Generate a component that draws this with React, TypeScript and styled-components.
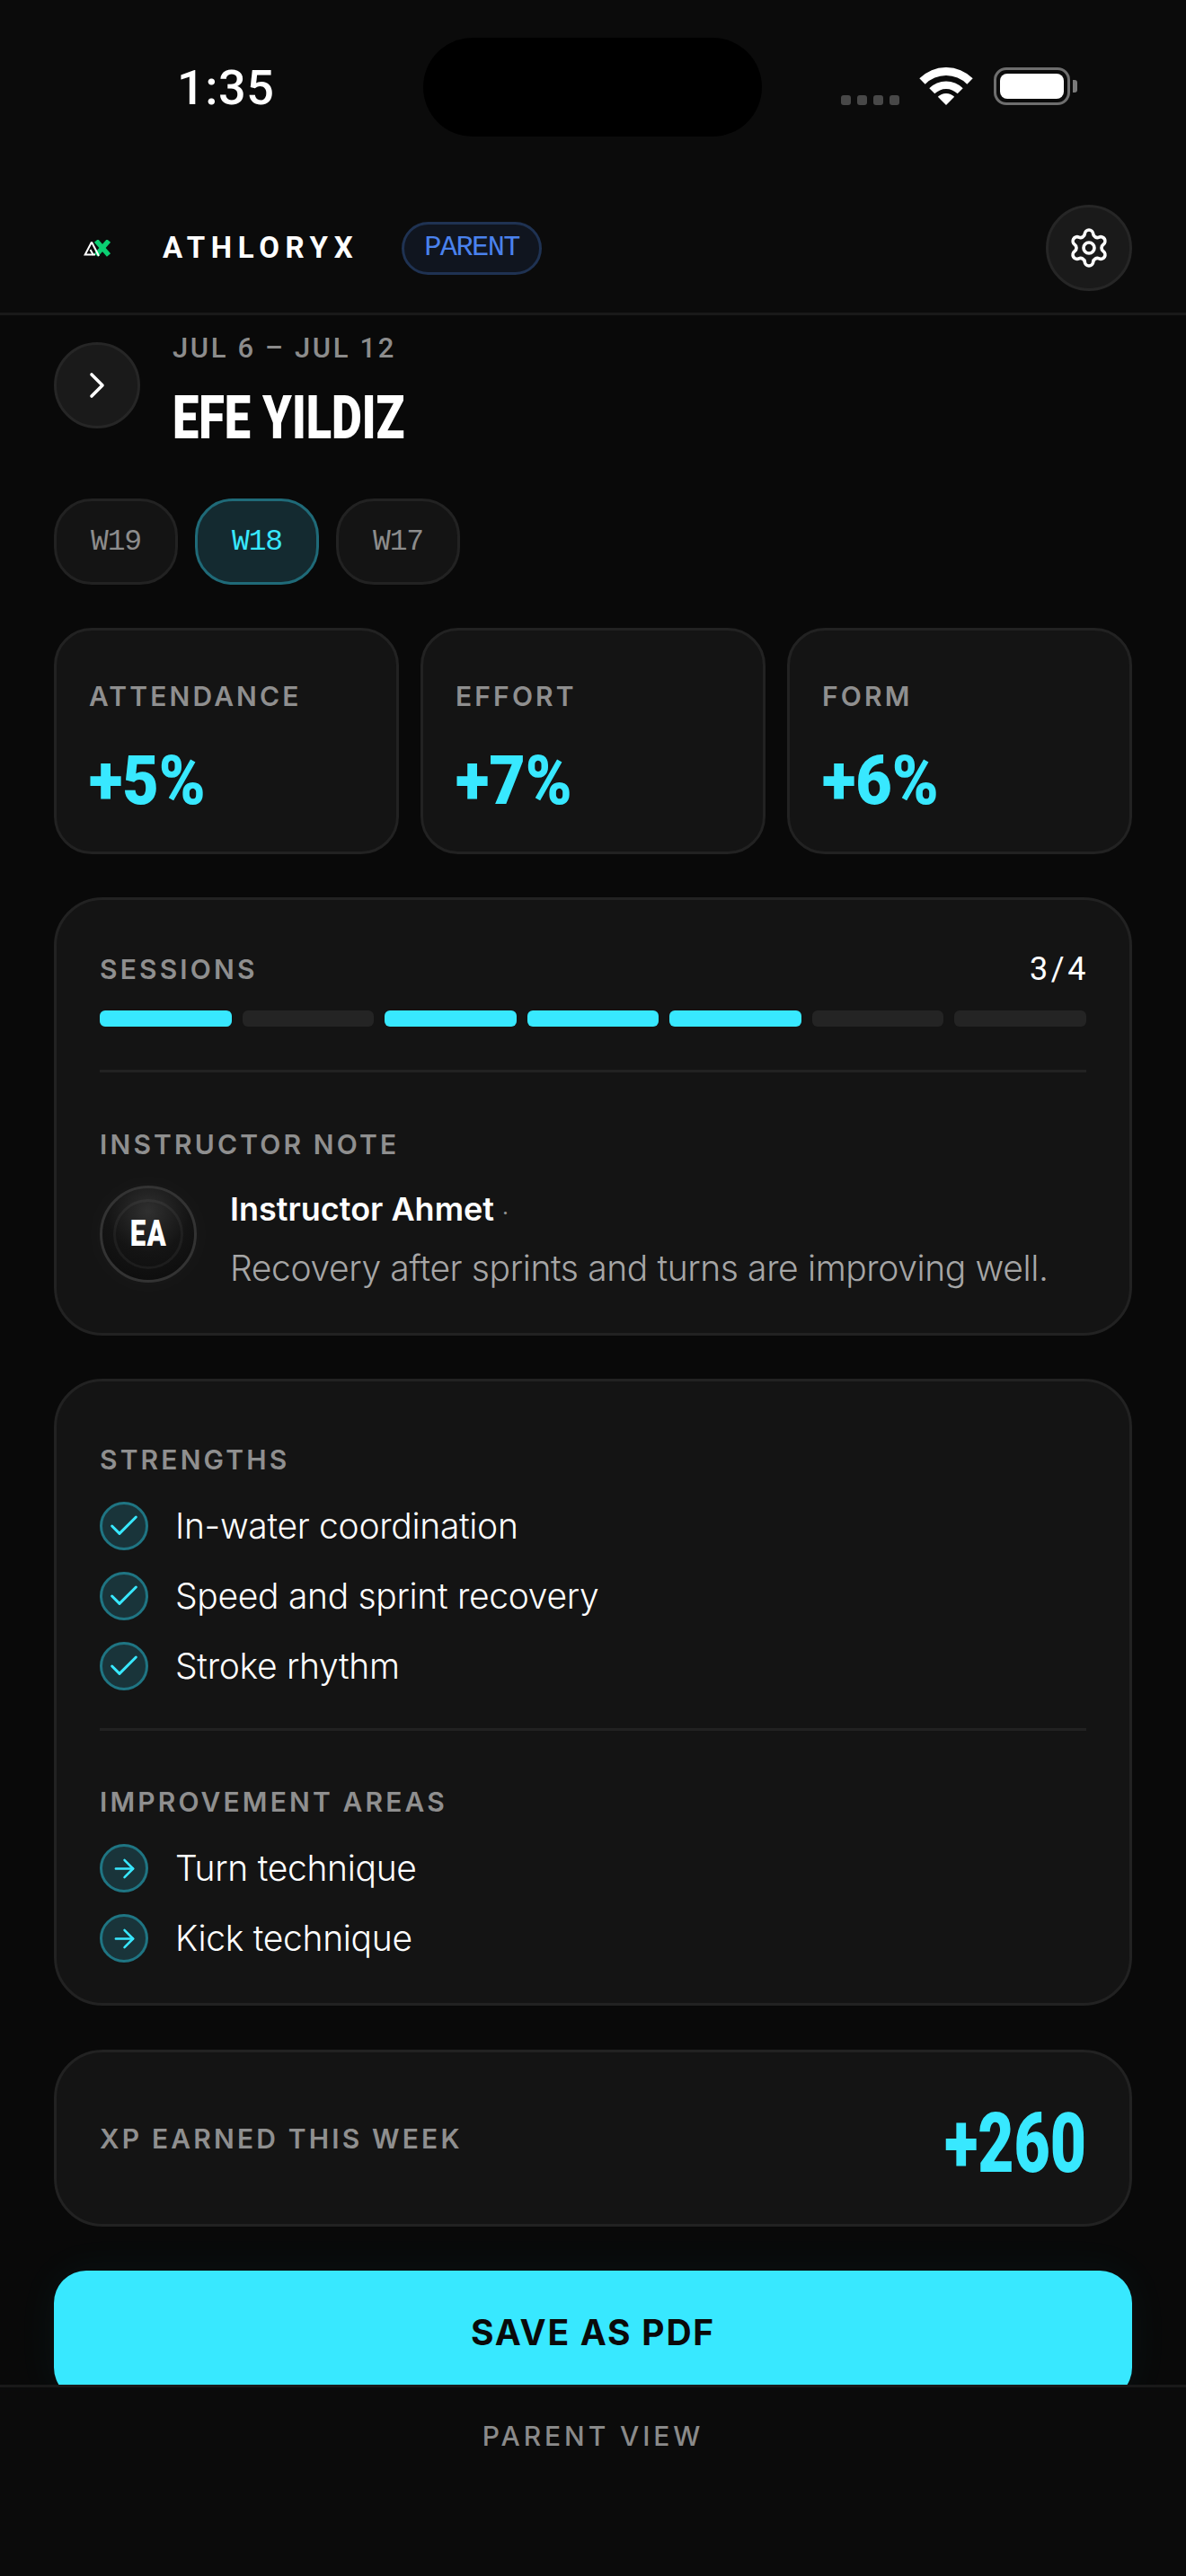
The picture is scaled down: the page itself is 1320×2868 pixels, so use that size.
import { ArrowRight, Check, ChevronRight, Settings } from 'lucide-react';
import styled, { createGlobalStyle } from 'styled-components';

const CYAN = '#38e8ff';
const BODY = "Inter, 'Noto Sans', sans-serif";
const DIN = "Roboto, 'Liberation Sans', sans-serif";
const MONO = "'Liberation Mono', 'DejaVu Sans Mono', monospace";

const GlobalStyle = createGlobalStyle`
  * { box-sizing: border-box; }
  html, body { margin: 0; padding: 0; background: #0a0a0a; }
`;

const Screen = styled.div`
  position: relative;
  display: flex;
  flex-direction: column;
  width: 1320px;
  height: 2868px;
  overflow: hidden;
  background: #0a0a0a;
  color: #fff;
  font-family: ${BODY};
`;

const StatusBar = styled.div`
  flex: none;
  display: flex;
  justify-content: space-between;
  align-items: flex-start;
  height: 180px;
  padding: 67px 121px 0 197px;
  background: #0b0b0b;
`;

const Time = styled.span`
  font: 500 54px/62px ${DIN};
  letter-spacing: 0.01em;
`;

const Island = styled.div`
  position: absolute;
  top: 42px;
  left: 471px;
  width: 377px;
  height: 110px;
  border-radius: 55px;
  background: #000;
`;

const StatusIcons = styled.div`
  display: flex;
  align-items: flex-end;
  margin-top: 8px;
`;

const SignalDots = styled.div`
  display: flex;
  gap: 7px;
  margin-right: 22px;

  i {
    width: 11px;
    height: 11px;
    border-radius: 3px;
    background: #484848;
  }
`;

const Battery = styled.div`
  display: flex;
  align-items: center;
  margin-left: 23px;
`;

const BatteryBody = styled.div`
  width: 85px;
  height: 42px;
  padding: 4px;
  border: 3px solid #6e6e6e;
  border-radius: 14px;

  i {
    display: block;
    height: 100%;
    border-radius: 8px;
    background: #fff;
  }
`;

const BatteryCap = styled.div`
  width: 5px;
  height: 14px;
  margin-left: 3px;
  border-radius: 0 3px 3px 0;
  background: #7a7a7a;
`;

const Header = styled.header`
  flex: none;
  display: flex;
  align-items: center;
  padding: 48px 60px 24px;
  background: #0b0b0b;
  border-bottom: 3px solid #191919;
`;

const Logo = styled.svg`
  flex: none;
  width: 31px;
  height: 19px;
  margin: 0 57px 0 33px;
`;

const Brand = styled.span`
  font: 700 33px/40px ${DIN};
  letter-spacing: 0.2em;
`;

const RolePill = styled.span`
  display: flex;
  align-items: center;
  height: 59px;
  margin-left: 48px;
  padding: 0 22px;
  border: 3px solid #1f3252;
  border-radius: 30px;
  background: #10151f;
  color: #4a82ee;
  font: 400 32px/1 ${MONO};
  letter-spacing: -1.6px;
`;

const RoundButton = styled.button`
  flex: none;
  display: flex;
  align-items: center;
  justify-content: center;
  width: 96px;
  height: 96px;
  padding: 0;
  border: 3px solid #262626;
  border-radius: 50%;
  background: #1a1a1a;
  color: #fff;
`;

const SettingsButton = styled(RoundButton)`
  margin-left: auto;
`;

const Main = styled.main`
  flex: 1;
  min-height: 0;
  overflow: hidden;
  padding: 19px 60px 0;
  background: #090909;
`;

const TitleRow = styled.div`
  display: flex;
  align-items: flex-start;
  gap: 36px;
  margin-bottom: 51px;

  ${RoundButton} {
    margin-top: 11px;
  }
`;

const DateRange = styled.div`
  font: 500 31px/36px ${DIN};
  letter-spacing: 0.085em;
  color: #8c8c8c;
`;

// heavy grotesque squeezed on its x axis, stands in for the display cut
const Title = styled.h1`
  width: 400px;
  height: 78px;
  margin: 20px 0 0;
  font: 900 67px/78px ${DIN};
  transform: scaleX(0.78);
  transform-origin: left center;
`;

const WeekRow = styled.div`
  display: flex;
  gap: 19px;
  margin-bottom: 48px;
`;

const WeekChip = styled.button<{ $active?: boolean }>`
  width: 138px;
  height: 96px;
  padding: 0;
  border: 3px solid ${({ $active }) => ($active ? '#1f6a78' : '#222')};
  border-radius: 42px;
  background: ${({ $active }) => ($active ? '#142a30' : '#141414')};
  color: ${({ $active }) => ($active ? CYAN : '#8c8c8c')};
  font: 400 33px/1 ${MONO};
  letter-spacing: -1.2px;
`;

const StatGrid = styled.div`
  display: grid;
  grid-template-columns: repeat(3, 384px);
  gap: 24px;
  margin-bottom: 48px;
`;

const StatCard = styled.div`
  height: 252px;
  padding: 55px 0 0 36px;
  border: 3px solid #222;
  border-radius: 42px;
  background: #141414;
`;

const Label = styled.div`
  font: 600 30px/36px ${BODY};
  letter-spacing: 0.105em;
  color: #8f8f8f;
`;

const StatValue = styled.div`
  width: 200px;
  margin-top: 32px;
  font: 900 76px/88px ${DIN};
  color: ${CYAN};
  transform: scaleX(0.92);
  transform-origin: left center;
`;

const Panel = styled.section`
  margin-bottom: 48px;
  padding: 0 48px;
  border: 3px solid #222;
  border-radius: 54px;
  background: #141414;
`;

const SessionsPanel = styled(Panel)`
  height: 488px;
  padding-top: 59px;
`;

const SkillsPanel = styled(Panel)`
  height: 698px;
  margin-bottom: 49px;
  padding-top: 69px;
`;

const SessionsHead = styled.div`
  display: flex;
  align-items: center;
  justify-content: space-between;
  height: 36px;
`;

const SessionCount = styled.span`
  margin-right: -3px;
  font: 400 36px/36px ${DIN};
  letter-spacing: 0.1em;
`;

const SessionBars = styled.div`
  display: grid;
  grid-template-columns: repeat(7, 1fr);
  gap: 12px;
  margin-top: 28px;
`;

const SessionBar = styled.div<{ $done: boolean }>`
  height: 18px;
  border-radius: 6px;
  background: ${({ $done }) => ($done ? CYAN : '#242424')};
`;

const Divider = styled.div<{ $top: number; $bottom: number }>`
  height: 3px;
  margin: ${({ $top, $bottom }) => `${$top}px 0 ${$bottom}px`};
  background: #222;
`;

const NoteRow = styled.div`
  display: flex;
  align-items: flex-start;
  gap: 37px;
  margin-top: 28px;
`;

const Avatar = styled.div`
  position: relative;
  flex: none;
  display: flex;
  align-items: center;
  justify-content: center;
  width: 108px;
  height: 108px;
  border: 3px solid #333;
  border-radius: 50%;
  background: radial-gradient(circle at 50% 25%, #303030 0%, #141414 50%, #0b0b0b 100%);
  box-shadow: 0 0 36px rgba(255, 255, 255, 0.03);

  &::after {
    content: '';
    position: absolute;
    inset: 12px;
    border: 3px solid rgba(255, 255, 255, 0.05);
    border-radius: 50%;
  }
`;

const Initials = styled.span`
  font: 900 40px/1 ${DIN};
  letter-spacing: 0.04em;
  transform: scaleX(0.78);
`;

const NoteBody = styled.div`
  padding-top: 2px;
`;

const NoteAuthor = styled.div`
  font: 600 36px/48px ${BODY};

  span {
    margin-left: 9px;
    color: #8f8f8f;
    font-weight: 400;
    font-size: 24px;
  }
`;

const NoteText = styled.div`
  margin-top: 13px;
  font: 300 39px/48px ${BODY};
  letter-spacing: -0.01em;
  color: #a6a6a6;
  white-space: nowrap;
`;

const SkillList = styled.ul`
  display: flex;
  flex-direction: column;
  gap: 24px;
  margin: 29px 0 0;
  padding: 0;
  list-style: none;
`;

const SkillItem = styled.li`
  display: flex;
  align-items: center;
  gap: 30px;
  height: 54px;
  font: 300 39px/54px ${BODY};
  letter-spacing: -0.008em;
`;

const SkillBadge = styled.span`
  flex: none;
  display: flex;
  align-items: center;
  justify-content: center;
  width: 54px;
  height: 54px;
  border: 3px solid #1f7583;
  border-radius: 50%;
  background: #19343a;
  color: ${CYAN};
`;

const XpPanel = styled(Panel)`
  display: flex;
  align-items: center;
  justify-content: space-between;
  height: 197px;
  margin-bottom: 49px;
`;

const XpValue = styled.span`
  padding-top: 12px;
  font: 900 92px/100px ${DIN};
  color: ${CYAN};
  transform: scaleX(0.755);
  transform-origin: right center;
`;

const SaveButton = styled.button`
  display: block;
  width: 100%;
  height: 144px;
  padding: 0 0 7px;
  border: 0;
  border-radius: 36px;
  background: ${CYAN};
  box-shadow: 0 0 48px rgba(56, 232, 255, 0.05);
  color: #0a0a0a;
  font: 700 39px/1 ${BODY};
  letter-spacing: 0.045em;
`;

const Footer = styled.footer`
  position: relative;
  flex: none;
  height: 213px;
  padding-top: 36px;
  border-top: 3px solid #191919;
  background: #0b0b0b;
  text-align: center;
  font: 500 30px/36px ${BODY};
  letter-spacing: 0.13em;
  color: #8a8a8a;
`;

const stats = [
  { label: 'ATTENDANCE', value: '+5%' },
  { label: 'EFFORT', value: '+7%' },
  { label: 'FORM', value: '+6%' },
];

const sessions = [true, false, true, true, true, false, false];
const strengths = ['In-water coordination', 'Speed and sprint recovery', 'Stroke rhythm'];
const improvements = ['Turn technique', 'Kick technique'];

function WifiIcon() {
  return (
    <svg width='60' height='42' viewBox='-1 0 60 42' fill='#fff'>
      <path d='M-.7 12.3A42 42 0 0 1 58.7 12.3L52.3 18.7A33 33 0 0 0 5.7 18.7Z' />
      <path d='M10.3 23.3A26.5 26.5 0 0 1 47.7 23.3L41.7 29.3A18 18 0 0 0 16.3 29.3Z' />
      <path d='M19.8 32.8A13 13 0 0 1 38.2 32.8L29 42Z' />
    </svg>
  );
}

function BrandMark() {
  return (
    <Logo viewBox='0 0 31 19'>
      <g stroke='#0bcf72' strokeWidth='5.5'>
        <path d='M14 1 28 17' />
        <path d='M28 1 14 17' />
      </g>
      <g fill='none' stroke='#fff' strokeWidth='2'>
        <path d='M9 2.5 1.7 16.5H13' />
        <path d='M9 2.5 17 18' />
        <path d='M7.5 11 11 17' />
      </g>
    </Logo>
  );
}

export default function App() {
  return (
    <Screen>
      <GlobalStyle />
      <StatusBar>
        <Time>1:35</Time>
        <StatusIcons>
          <SignalDots>
            <i />
            <i />
            <i />
            <i />
          </SignalDots>
          <WifiIcon />
          <Battery>
            <BatteryBody>
              <i />
            </BatteryBody>
            <BatteryCap />
          </Battery>
        </StatusIcons>
      </StatusBar>
      <Island />

      <Header>
        <BrandMark />
        <Brand>ATHLORYX</Brand>
        <RolePill>PARENT</RolePill>
        <SettingsButton>
          <Settings size={48} strokeWidth={1.8} />
        </SettingsButton>
      </Header>

      <Main>
        <TitleRow>
          <RoundButton>
            <ChevronRight size={48} strokeWidth={1.8} />
          </RoundButton>
          <div>
            <DateRange>JUL 6 – JUL 12</DateRange>
            <Title>EFE YILDIZ</Title>
          </div>
        </TitleRow>

        <WeekRow>
          <WeekChip>W19</WeekChip>
          <WeekChip $active>W18</WeekChip>
          <WeekChip>W17</WeekChip>
        </WeekRow>

        <StatGrid>
          {stats.map((stat) => (
            <StatCard key={stat.label}>
              <Label>{stat.label}</Label>
              <StatValue>{stat.value}</StatValue>
            </StatCard>
          ))}
        </StatGrid>

        <SessionsPanel>
          <SessionsHead>
            <Label>SESSIONS</Label>
            <SessionCount>3/4</SessionCount>
          </SessionsHead>
          <SessionBars>
            {sessions.map((done, i) => (
              <SessionBar key={i} $done={done} />
            ))}
          </SessionBars>
          <Divider $top={48} $bottom={62} />
          <Label>INSTRUCTOR NOTE</Label>
          <NoteRow>
            <Avatar>
              <Initials>EA</Initials>
            </Avatar>
            <NoteBody>
              <NoteAuthor>
                Instructor Ahmet<span>·</span>
              </NoteAuthor>
              <NoteText>Recovery after sprints and turns are improving well.</NoteText>
            </NoteBody>
          </NoteRow>
        </SessionsPanel>

        <SkillsPanel>
          <Label>STRENGTHS</Label>
          <SkillList>
            {strengths.map((item) => (
              <SkillItem key={item}>
                <SkillBadge>
                  <Check size={40} strokeWidth={1.8} />
                </SkillBadge>
                {item}
              </SkillItem>
            ))}
          </SkillList>
          <Divider $top={42} $bottom={61} />
          <Label>IMPROVEMENT AREAS</Label>
          <SkillList>
            {improvements.map((item) => (
              <SkillItem key={item}>
                <SkillBadge>
                  <ArrowRight size={33} strokeWidth={1.8} />
                </SkillBadge>
                {item}
              </SkillItem>
            ))}
          </SkillList>
        </SkillsPanel>

        <XpPanel>
          <Label>XP EARNED THIS WEEK</Label>
          <XpValue>+260</XpValue>
        </XpPanel>

        <SaveButton>SAVE AS PDF</SaveButton>
      </Main>

      <Footer>PARENT VIEW</Footer>
    </Screen>
  );
}
